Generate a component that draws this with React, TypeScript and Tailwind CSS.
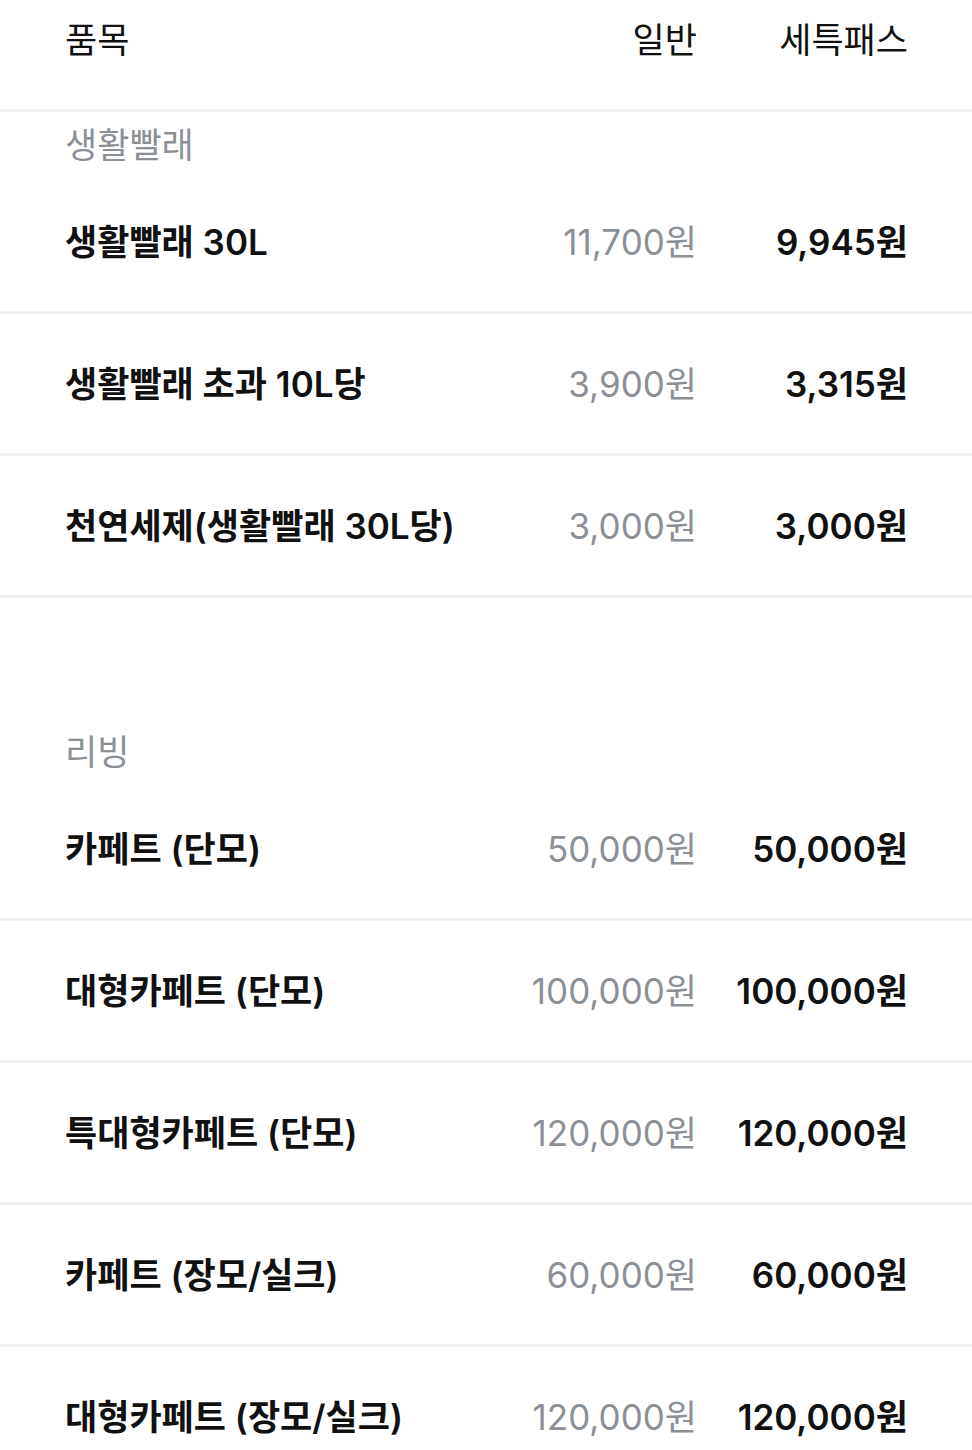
import React from "react";

type Row = { name: string; normal: string; pass: string };
type Section = { title: string; rows: Row[] };

const sections: Section[] = [
  {
    title: "생활빨래",
    rows: [
      { name: "생활빨래 30L", normal: "11,700원", pass: "9,945원" },
      { name: "생활빨래 초과 10L당", normal: "3,900원", pass: "3,315원" },
      { name: "천연세제(생활빨래 30L당)", normal: "3,000원", pass: "3,000원" },
    ],
  },
  {
    title: "리빙",
    rows: [
      { name: "카페트 (단모)", normal: "50,000원", pass: "50,000원" },
      { name: "대형카페트 (단모)", normal: "100,000원", pass: "100,000원" },
      { name: "특대형카페트 (단모)", normal: "120,000원", pass: "120,000원" },
      { name: "카페트 (장모/실크)", normal: "60,000원", pass: "60,000원" },
      { name: "대형카페트 (장모/실크)", normal: "120,000원", pass: "120,000원" },
    ],
  },
];

const font = { fontFamily: '"Inter", "Noto Sans CJK KR", sans-serif' };

export default function App() {
  return (
    <div className="min-h-screen bg-white text-[#111111]" style={font}>
      <div className="flex items-start pl-[65px] pr-[64px] pt-[20px] pb-[49px] text-[35px] leading-[40px]">
        <div className="flex-1">품목</div>
        <div className="w-[170px] text-right">일반</div>
        <div className="ml-[34px] w-[177px] text-right">세특패스</div>
      </div>
      <div className="h-[3px] bg-[#f0f1f2]" />
      {sections.map((s, si) => (
        <div key={s.title} className={si > 0 ? "pt-[121px]" : ""}>
          <div className="pl-[65px] pr-[64px] pt-[13px] pb-[7px] text-[35px] leading-[40px] text-[#8b9096]">
            {s.title}
          </div>
          {s.rows.map((r) => (
            <div key={r.name} className="border-b-[3px] border-[#f0f1f2]">
              <div className="flex h-[139px] items-center pl-[65px] pr-[64px] text-[35px] leading-[40px]">
                <div className="flex-1 font-semibold">{r.name}</div>
                <div className="w-[170px] text-right text-[#8b9096]">{r.normal}</div>
                <div className="ml-[32px] w-[179px] text-right font-semibold">{r.pass}</div>
              </div>
            </div>
          ))}
        </div>
      ))}
    </div>
  );
}
